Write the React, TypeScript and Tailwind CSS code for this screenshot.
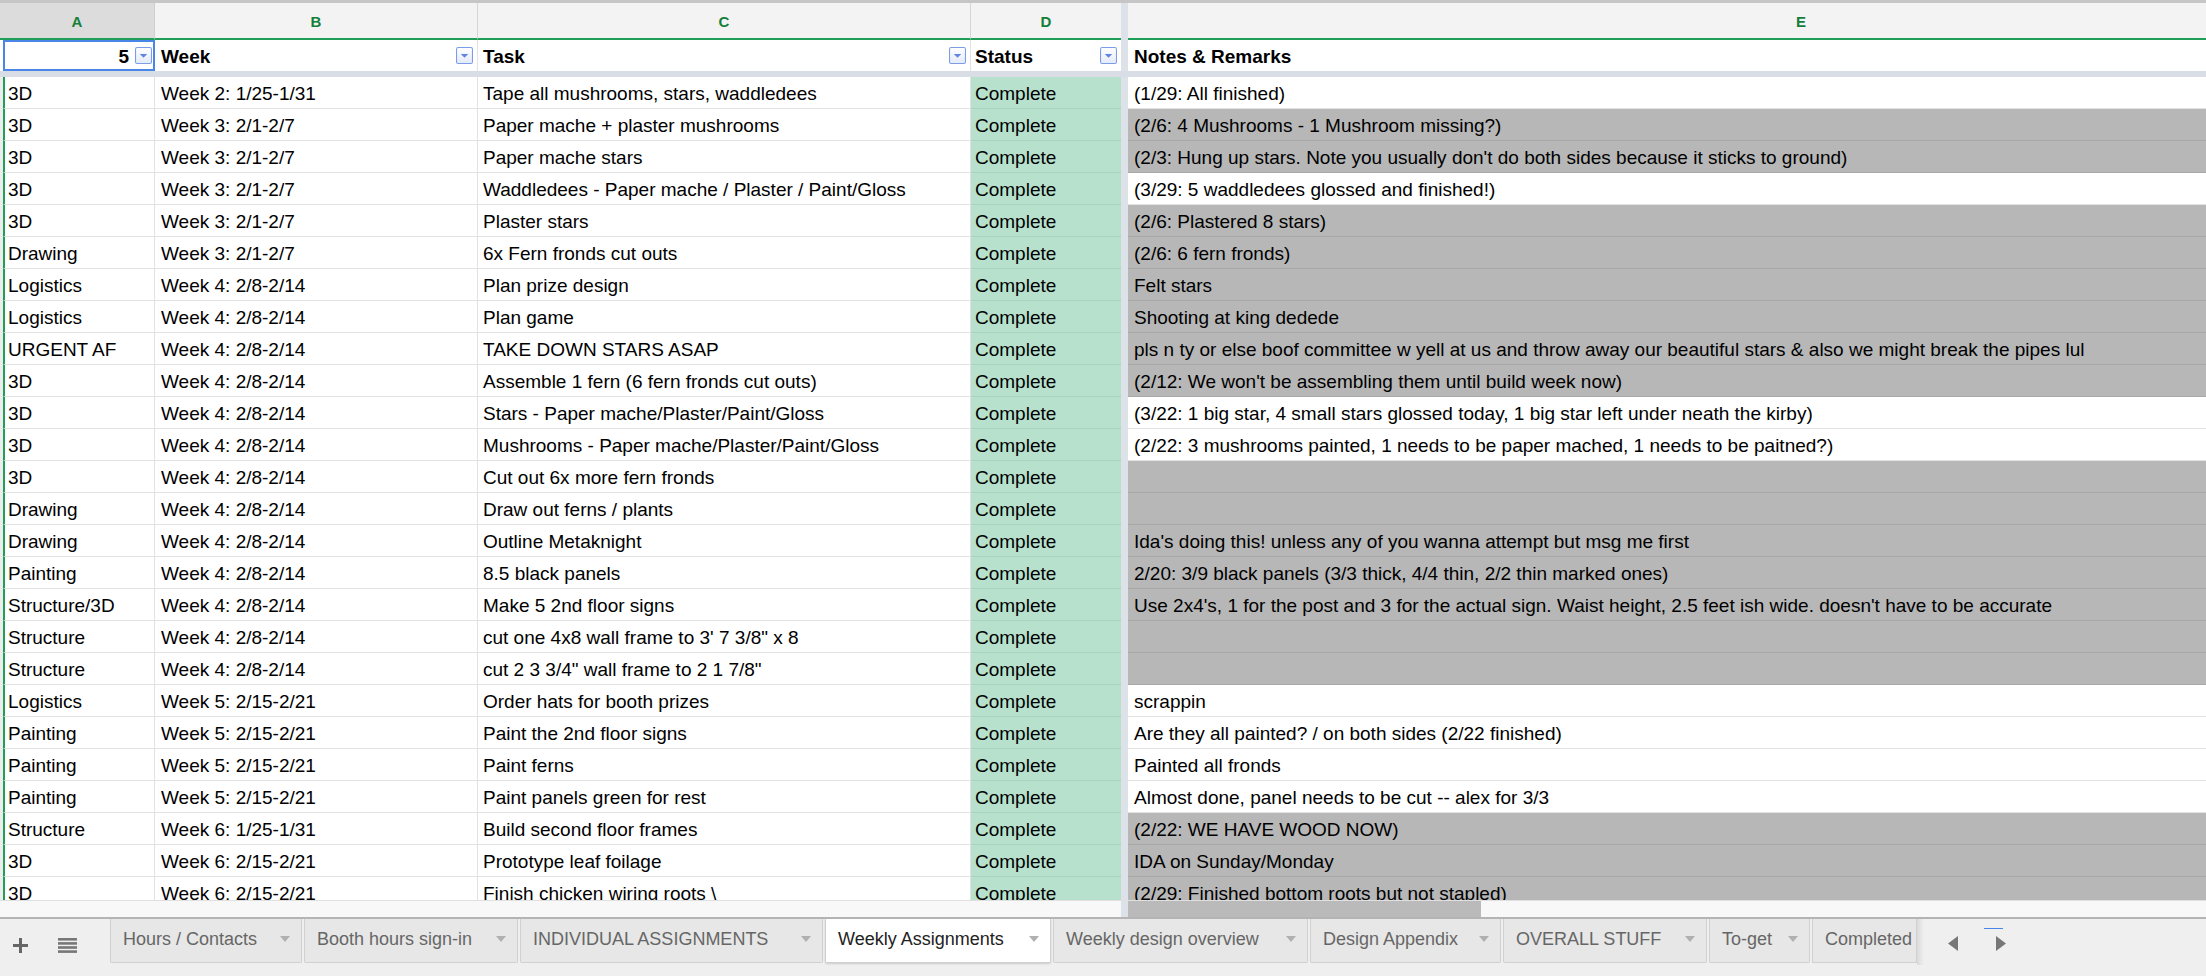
import React from 'react';

type Row = { cat: string; week: string; task: string; note: string; gray: boolean };

const W2 = 'Week 2: 1/25-1/31';
const W3 = 'Week 3: 2/1-2/7';
const W4 = 'Week 4: 2/8-2/14';
const W5 = 'Week 5: 2/15-2/21';

const rows: Row[] = [
  { cat: '3D', week: W2, task: 'Tape all mushrooms, stars, waddledees', note: '(1/29: All finished)', gray: false },
  { cat: '3D', week: W3, task: 'Paper mache + plaster mushrooms', note: '(2/6: 4 Mushrooms - 1 Mushroom missing?)', gray: true },
  { cat: '3D', week: W3, task: 'Paper mache stars', note: "(2/3: Hung up stars. Note you usually don't do both sides because it sticks to ground)", gray: true },
  { cat: '3D', week: W3, task: 'Waddledees - Paper mache / Plaster / Paint/Gloss', note: '(3/29: 5 waddledees glossed and finished!)', gray: false },
  { cat: '3D', week: W3, task: 'Plaster stars', note: '(2/6: Plastered 8 stars)', gray: true },
  { cat: 'Drawing', week: W3, task: '6x Fern fronds cut outs', note: '(2/6: 6 fern fronds)', gray: true },
  { cat: 'Logistics', week: W4, task: 'Plan prize design', note: 'Felt stars', gray: true },
  { cat: 'Logistics', week: W4, task: 'Plan game', note: 'Shooting at king dedede', gray: true },
  { cat: 'URGENT AF', week: W4, task: 'TAKE DOWN STARS ASAP', note: 'pls n ty or else boof committee w yell at us and throw away our beautiful stars & also we might break the pipes lul', gray: true },
  { cat: '3D', week: W4, task: 'Assemble 1 fern (6 fern fronds cut outs)', note: "(2/12: We won't be assembling them until build week now)", gray: true },
  { cat: '3D', week: W4, task: 'Stars - Paper mache/Plaster/Paint/Gloss', note: '(3/22: 1 big star, 4 small stars glossed today, 1 big star left under neath the kirby)', gray: false },
  { cat: '3D', week: W4, task: 'Mushrooms - Paper mache/Plaster/Paint/Gloss', note: '(2/22: 3 mushrooms painted, 1 needs to be paper mached, 1 needs to be paitned?)', gray: false },
  { cat: '3D', week: W4, task: 'Cut out 6x more fern fronds', note: '', gray: true },
  { cat: 'Drawing', week: W4, task: 'Draw out ferns / plants', note: '', gray: true },
  { cat: 'Drawing', week: W4, task: 'Outline Metaknight', note: "Ida's doing this! unless any of you wanna attempt but msg me first", gray: true },
  { cat: 'Painting', week: W4, task: '8.5 black panels', note: '2/20: 3/9 black panels (3/3 thick, 4/4 thin, 2/2 thin marked ones)', gray: true },
  { cat: 'Structure/3D', week: W4, task: 'Make 5 2nd floor signs', note: "Use 2x4's, 1 for the post and 3 for the actual sign. Waist height, 2.5 feet ish wide. doesn't have to be accurate", gray: true },
  { cat: 'Structure', week: W4, task: 'cut one 4x8 wall frame to 3\' 7 3/8" x 8', note: '', gray: true },
  { cat: 'Structure', week: W4, task: 'cut 2 3 3/4" wall frame to 2 1 7/8"', note: '', gray: true },
  { cat: 'Logistics', week: W5, task: 'Order hats for booth prizes', note: 'scrappin', gray: false },
  { cat: 'Painting', week: W5, task: 'Paint the 2nd floor signs', note: 'Are they all painted? / on both sides (2/22 finished)', gray: false },
  { cat: 'Painting', week: W5, task: 'Paint ferns', note: 'Painted all fronds', gray: false },
  { cat: 'Painting', week: W5, task: 'Paint panels green for rest', note: 'Almost done, panel needs to be cut -- alex for 3/3', gray: false },
  { cat: 'Structure', week: 'Week 6: 1/25-1/31', task: 'Build second floor frames', note: '(2/22: WE HAVE WOOD NOW)', gray: true },
  { cat: '3D', week: 'Week 6: 2/15-2/21', task: 'Prototype leaf foilage', note: 'IDA on Sunday/Monday', gray: true },
  { cat: '3D', week: 'Week 6: 2/15-2/21', task: 'Finish chicken wiring roots \\', note: '(2/29: Finished bottom roots but not stapled)', gray: true },
];

const tabs = [
  { name: 'Hours / Contacts', w: 'w-[192px]' },
  { name: 'Booth hours sign-in', w: 'w-[214px]' },
  { name: 'INDIVIDUAL ASSIGNMENTS', w: 'w-[303px]' },
  { name: 'Weekly Assignments', w: 'w-[226px]', active: true },
  { name: 'Weekly design overview', w: 'w-[255px]' },
  { name: 'Design Appendix', w: 'w-[191px]' },
  { name: 'OVERALL STUFF', w: 'w-[204px]' },
  { name: 'To-get', w: 'w-[101px]' },
];

const FilterIcon = () => (
  <svg width="17" height="17" viewBox="0 0 16 16" className="mb-[3px] shrink-0">
    <defs>
      <linearGradient id="fg" x1="0" y1="0" x2="0" y2="1">
        <stop offset="0" stopColor="#ffffff" />
        <stop offset="1" stopColor="#e3eafa" />
      </linearGradient>
    </defs>
    <rect x="0.5" y="0.5" width="15" height="15" rx="1.5" fill="url(#fg)" stroke="#7d9ce8" />
    <path d="M4.5 6.5 L11.5 6.5 L8 10 Z" fill="#5f84e2" />
  </svg>
);

const TabArrow = () => (
  <svg width="10" height="6" viewBox="0 0 10 6" className="shrink-0">
    <path d="M0 0 L10 0 L5 6 Z" fill="#b0b0b0" />
  </svg>
);

const App: React.FC = () => {
  return (
    <div className="flex h-[976px] w-[2206px] flex-col overflow-hidden bg-white font-['Liberation_Sans',Arial,Helvetica,sans-serif] text-[19px] text-black">
      {/* column letters */}
      <div className="flex h-[40px] shrink-0 border-t-[3px] border-t-[#c6c6c6] bg-[#f3f3f3] text-[15px] font-bold text-[#13803a]">
        <div className="flex w-[155px] shrink-0 items-center justify-center border-r border-b-2 border-r-[#cfcfcf] border-b-[#1e9e57] bg-[#dcdcdc] pt-[3px]">A</div>
        <div className="flex w-[323px] shrink-0 items-center justify-center border-r border-b-2 border-r-[#d6d6d6] border-b-[#1e9e57] pt-[3px]">B</div>
        <div className="flex w-[493px] shrink-0 items-center justify-center border-r border-b-2 border-r-[#d6d6d6] border-b-[#1e9e57] pt-[3px]">C</div>
        <div className="flex w-[150px] shrink-0 items-center justify-center border-b-2 border-b-[#1e9e57] pt-[3px]">D</div>
        <div className="w-[7px] shrink-0 bg-[#dde1e8]" />
        <div className="flex flex-1 overflow-hidden border-b-2 border-b-[#1e9e57]">
          <div className="flex w-[1346px] shrink-0 items-center justify-center pt-[3px]">E</div>
        </div>
      </div>

      {/* header row */}
      <div className="flex h-[31px] shrink-0 font-bold">
        <div className="w-[3px] shrink-0" />
        <div className="flex w-[152px] shrink-0 items-center justify-end gap-[6px] border-2 border-[#4a86e8] pt-[3px] pr-[1px]">
          <span>5</span>
          <FilterIcon />
        </div>
        <div className="flex w-[323px] shrink-0 items-center justify-between border-r border-[#e2e2e2] pt-[3px] pr-[4px] pl-[6px]">
          <span>Week</span>
          <FilterIcon />
        </div>
        <div className="flex w-[493px] shrink-0 items-center justify-between border-r border-[#e2e2e2] pt-[3px] pr-[4px] pl-[5px]">
          <span>Task</span>
          <FilterIcon />
        </div>
        <div className="flex w-[150px] shrink-0 items-center justify-between pt-[3px] pr-[4px] pl-[4px]">
          <span>Status</span>
          <FilterIcon />
        </div>
        <div className="w-[7px] shrink-0 bg-[#dde1e8]" />
        <div className="flex flex-1 items-center pt-[3px] pl-[6px]">Notes &amp; Remarks</div>
      </div>

      {/* frozen row separator */}
      <div className="h-[6px] shrink-0 bg-[#d9dde6]" />

      {/* data rows */}
      <div className="h-[823px] shrink-0 overflow-hidden">
        {rows.map((r, i) => (
          <div key={i} className="flex h-[32px] whitespace-nowrap">
            <div className="w-[3px] shrink-0 bg-[#ececec]" />
            <div className="flex w-[152px] shrink-0 items-center overflow-hidden border-r border-b border-l-2 border-r-[#e2e2e2] border-b-[#e2e2e2] border-l-[#1e9e57] pt-[3px] pl-[3px]">{r.cat}</div>
            <div className="flex w-[323px] shrink-0 items-center overflow-hidden border-r border-b border-[#e2e2e2] pt-[3px] pl-[6px]">{r.week}</div>
            <div className="flex w-[493px] shrink-0 items-center overflow-hidden border-r border-b border-[#e2e2e2] pt-[3px] pl-[5px]">{r.task}</div>
            <div className="flex w-[150px] shrink-0 items-center border-b border-[#a9d3bf] bg-[#b7e1cd] pt-[3px] pl-[4px]">Complete</div>
            <div className="w-[7px] shrink-0 bg-[#dde1e8]" />
            <div className={r.gray ? 'flex flex-1 items-center overflow-hidden border-b border-[#a8a8a8] bg-[#b7b7b7] pt-[3px] pl-[6px]' : 'flex flex-1 items-center overflow-hidden border-b border-[#e2e2e2] bg-white pt-[3px] pl-[6px]'}>{r.note}</div>
          </div>
        ))}
      </div>

      {/* horizontal scrollbar */}
      <div className="flex h-[17px] shrink-0 border-t border-[#e0e0e0] bg-[#f8f8f8]">
        <div className="w-[1121px] shrink-0" />
        <div className="w-[7px] shrink-0 bg-[#dde1e8]" />
        <div className="w-[353px] shrink-0 bg-[#bababa]" />
      </div>
      <div className="h-[2px] shrink-0 bg-[#b4b4b4]" />

      {/* sheet tabs */}
      <div className="flex flex-1 items-start bg-[#efefef] text-[18px] text-[#666]">
        <div className="flex h-[52px] w-[110px] shrink-0 items-center gap-[30px] pl-[13px]">
          <svg width="15" height="15" viewBox="0 0 15 15">
            <path d="M7.5 0 V15 M0 7.5 H15" stroke="#666" strokeWidth="3" />
          </svg>
          <svg width="19" height="15" viewBox="0 0 19 15">
            <rect x="0" y="0" width="19" height="2.6" fill="#777" />
            <rect x="0" y="4.1" width="19" height="2.6" fill="#777" />
            <rect x="0" y="8.2" width="19" height="2.6" fill="#777" />
            <rect x="0" y="12.3" width="19" height="2.6" fill="#777" />
          </svg>
        </div>
        <div className="flex gap-[2px]">
          {tabs.map((t) => (
            <div
              key={t.name}
              className={
                t.active
                  ? `flex h-[44px] ${t.w} shrink-0 items-center justify-between rounded-b-[2px] border-x border-b border-[#cfcfcf] bg-white pr-[11px] pb-[3px] pl-[12px] text-[#222] shadow-[0_1px_2px_rgba(0,0,0,0.15)]`
                  : `flex h-[44px] ${t.w} shrink-0 items-center justify-between rounded-b-[2px] border-x border-b border-[#d0d0d0] bg-[#e7e7e7] pr-[11px] pb-[3px] pl-[12px]`
              }
            >
              <span className="whitespace-nowrap">{t.name}</span>
              <TabArrow />
            </div>
          ))}
          <div className="flex h-[44px] w-[105px] shrink-0 items-center overflow-hidden border-x border-b border-[#d0d0d0] bg-[#e7e7e7] pb-[3px] pl-[12px]">
            <span className="whitespace-nowrap">Completed</span>
          </div>
        </div>
        <div className="h-[46px] w-[7px] shrink-0 bg-gradient-to-r from-[#dadada] to-[#efefef]" />
        <div className="flex h-[48px] items-center gap-[38px] pl-[24px]">
          <svg width="10" height="15" viewBox="0 0 10 15">
            <path d="M10 0 L10 15 L0 7.5 Z" fill="#777" />
          </svg>
          <div className="relative">
            <div className="absolute -top-[8px] -left-[12px] h-[1px] w-[19px] bg-[#4a86e8]" />
            <svg width="10" height="15" viewBox="0 0 10 15">
              <path d="M0 0 L0 15 L10 7.5 Z" fill="#777" />
            </svg>
          </div>
        </div>
      </div>
    </div>
  );
};

export default App;
